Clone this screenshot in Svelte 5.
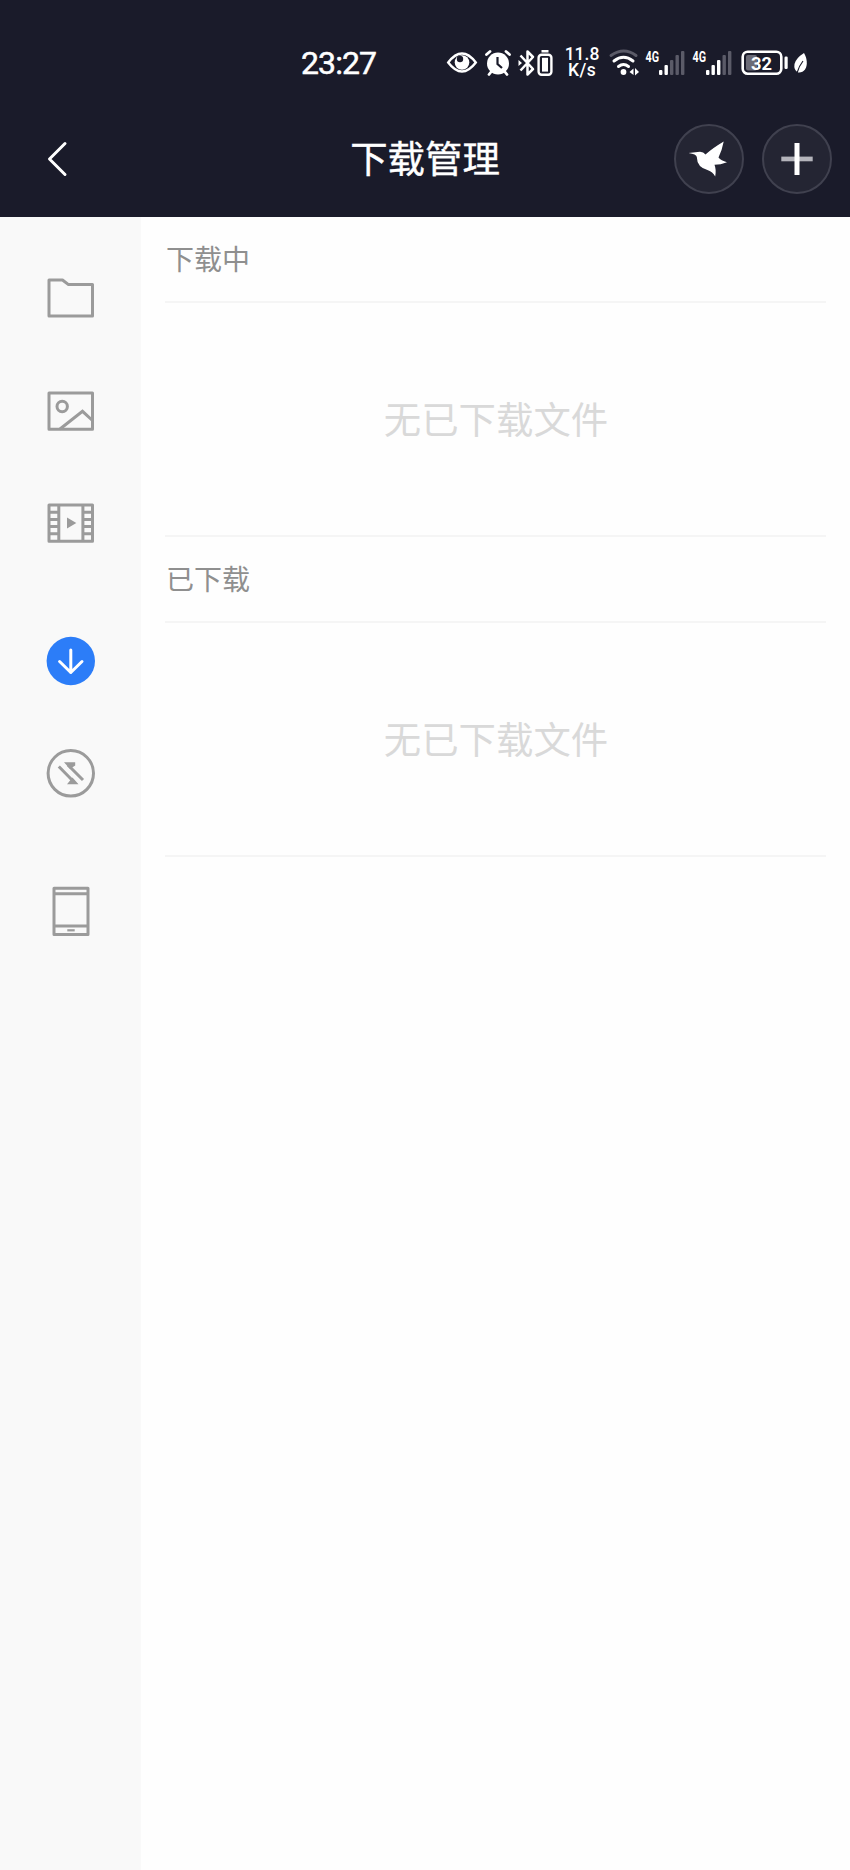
<script lang="ts">
  const navGroups: string[][] = [
    ["folder", "image", "video"],
    ["download", "transfer"],
    ["device"],
  ];

  const sections = [
    { title: "下载中", empty: "无已下载文件" },
    { title: "已下载", empty: "无已下载文件" },
  ];

  // Number of lit bars for each SIM
  const sims = [2, 3];
  const barHeights = [5, 10, 15, 20, 24];

  let active = "download";
</script>

<div class="screen">
  <header>
    <div class="status">
      <span class="time">23:27</span>
      <div class="indicators">
        <svg class="eye" width="32" height="36" viewBox="0 0 32 36">
          <path d="M2.2 17.5Q9 8.500 16 8.500T29.800 17.500Q23 26.500 16 26.500T2.200 17.500Z" fill="none" stroke="#fff" stroke-width="2.4" />
          <circle cx="16" cy="17.500" r="7.300" fill="#fff" />
          <circle cx="14" cy="14" r="3.200" fill="#1a1b2a" />
        </svg>
        <svg class="alarm" width="28" height="36" viewBox="0 0 28 36">
          <circle cx="14" cy="18.500" r="11" fill="#fff" />
          <path d="M2.500 9.500L6 6.500M25.500 9.500L22 6.500M7 27L5 29.500M21 27L23 29.500" stroke="#fff" stroke-width="2.800" stroke-linecap="round" />
          <path d="M13.500 12V19L18 23" fill="none" stroke="#1a1b2a" stroke-width="2.200" />
        </svg>
        <svg class="bluetooth" width="36" height="36" viewBox="0 0 36 36">
          <path d="M2.500 10.500L15 24L9.500 29.500V6.500L15 12L2.500 25.500" fill="none" stroke="#fff" stroke-width="2.500" stroke-linejoin="round" />
          <path d="M0.500 15L4 18L0.500 21ZM23.500 5h7v2.500h-7z" fill="#fff" />
          <rect x="20.600" y="9.700" width="12.800" height="20" rx="3" fill="none" stroke="#fff" stroke-width="2.400" />
          <rect x="24" y="12.800" width="6" height="13.800" fill="#fff" />
        </svg>
        <div class="speed"><span>11.8</span><span class="unit">K/s</span></div>
        <svg class="wifi" width="32" height="36" viewBox="0 0 32 36">
          <g fill="none" stroke-linecap="round" stroke-width="3">
            <path d="M3 10.500Q16 1.500 28 10.500" stroke="#5b5b68" />
            <path d="M6 16Q15.500 8.500 25 16" stroke="#fff" />
            <path d="M10.500 21.500Q15.500 17.500 20.500 21.500" stroke="#fff" />
          </g>
          <circle cx="15.500" cy="27" r="2.900" fill="#fff" />
          <path d="M25.500 23.500V30L21.500 27ZM27 23V30.500L31 27Z" fill="#fff" />
        </svg>
        {#each sims as lit}
          <div class="sim">
            <svg width="41" height="36" viewBox="0 0 41 36">
              <text x="0.500" y="16.500" textLength="13.500" lengthAdjust="spacingAndGlyphs">4G</text>
              {#each barHeights as h, i}
                <rect x={14 + i * 5.5} y={30 - h} width="3.400" height={h} rx="1" fill={i < lit ? "#fff" : "#5b5b68"} />
              {/each}
            </svg>
          </div>
        {/each}
        <svg class="battery" width="48" height="36" viewBox="0 0 48 36">
          <rect x="1.700" y="6.700" width="38.600" height="22" rx="5" fill="none" stroke="#fff" stroke-width="2.600" />
          <rect x="5" y="10" width="11" height="15.500" rx="2" fill="#6b6b77" />
          <text x="10" y="24.500" textLength="21" lengthAdjust="spacingAndGlyphs">32</text>
          <rect x="43.500" y="11.500" width="3.200" height="12.500" rx="1.200" fill="#fff" />
        </svg>
        <svg class="leaf" width="16" height="36" viewBox="0 0 16 36">
          <path d="M11 8C14 13 15 20 12 24.500Q9.500 28 5 27.500Q0.500 25 1.500 19Q3 13 11 8Z" fill="#fff" />
          <path d="M10 16Q6 21 4 28" fill="none" stroke="#1a1b2a" stroke-width="1.200" />
        </svg>
      </div>
    </div>

    <div class="toolbar">
      <button class="back" aria-label="返回">
        <svg width="24" height="40" viewBox="0 0 24 40">
          <path d="M20 4.500L4.500 20L20 35.500" fill="none" stroke="#fff" stroke-width="3" stroke-linecap="round" stroke-linejoin="round" />
        </svg>
      </button>
      <h1>下载管理</h1>
      <div class="actions">
        <button class="round" aria-label="迅雷">
          <svg width="40" height="40" viewBox="0 0 40 40">
            <path d="M-0.500 13.900L11 12.700Q14.500 12.700 16.500 15.500Q23 9.500 34.700 2.500Q33 11.500 29.500 18.500Q32 21.500 38 23.200Q31.500 25.800 25.500 25.800Q27.500 31 26.200 37.500Q23.500 32.500 19 31.200Q8 28.500 7.800 18Q7.500 15 -0.500 13.900Z" fill="#fff" />
          </svg>
        </button>
        <button class="round" aria-label="添加">
          <svg width="40" height="40" viewBox="0 0 40 40">
            <rect x="4.300" y="17.600" width="31.400" height="4.700" fill="#b4b4bb" />
            <rect x="17.500" y="4" width="5" height="32" fill="#fff" />
          </svg>
        </button>
      </div>
    </div>
  </header>

  <div class="body">
    <nav>
      {#each navGroups as group}
        <div class="group">
          {#each group as item}
            <button class="nav-item" class:active={item === active} aria-label={item}>
              <svg width="50" height="50" viewBox="0 0 50 50" fill="none" stroke="currentColor" stroke-width="3">
                {#if item === "folder"}
                  <path d="M3 7H16.500L22.500 11.600H46.500V43.100H3Z" stroke-linejoin="round" />
                {:else if item === "image"}
                  <rect x="3" y="7.100" width="43.500" height="36.200" stroke-linejoin="round" />
                  <circle cx="16.200" cy="20.500" r="5.200" />
                  <path d="M14 43L36.500 25.300L46.500 34.500" />
                {:else if item === "video"}
                  <rect x="3" y="7" width="43.500" height="36.200" stroke-linejoin="round" />
                  <path d="M12.800 7V43M36.900 7V43M3 14.200H13M3 21.400H13M3 28.600H13M3 35.800H13M37 14.200H47M37 21.400H47M37 28.600H47M37 35.800H47" />
                  <path d="M21 19.500L30.300 25L21 30.500Z" fill="currentColor" stroke="none" />
                {:else if item === "download"}
                  <circle cx="24.800" cy="25" r="24.200" fill="currentColor" stroke="none" />
                  <path d="M24.800 14V36.500M13.600 25.500L24.800 36.500L36 25.500" stroke="#fff" stroke-linecap="round" stroke-linejoin="round" />
                {:else if item === "transfer"}
                  <circle cx="24.800" cy="25.300" r="22.700" />
                  <path d="M12.800 18.500L28 34M37 32L22 17" />
                  <path d="M21 36.300H32.500L26.500 29.500ZM18 14.300H29.200V17.500L24 21Z" fill="currentColor" stroke="none" />
                {:else}
                  <rect x="8" y="2.200" width="34" height="46.200" stroke-linejoin="round" />
                  <path d="M8 7.800H42M8 40H42" />
                  <path d="M21.300 44.300H28.700" stroke-width="2.200" />
                {/if}
              </svg>
            </button>
          {/each}
        </div>
      {/each}
    </nav>

    <main>
      {#each sections as section}
        <section>
          <h2>{section.title}</h2>
          <p>{section.empty}</p>
        </section>
      {/each}
    </main>
  </div>
</div>

<style>
  :global(body) {
    margin: 0;
    background: #fff;
  }

  .screen {
    display: flex;
    flex-direction: column;
    width: 850px;
    height: 1870px;
    font-family: "Noto Sans CJK SC", sans-serif;
  }

  header {
    height: 217px;
    background: #1a1b2a;
    color: #fff;
  }

  button {
    display: flex;
    align-items: center;
    justify-content: center;
    padding: 0;
    border: none;
    background: none;
    color: inherit;
  }

  svg {
    display: block;
    overflow: visible;
    flex: none;
  }

  .status {
    display: flex;
    justify-content: space-between;
    box-sizing: border-box;
    height: 100px;
    padding: 45px 41px 0 301px;
    font-family: Roboto, sans-serif;
  }

  .time {
    font-size: 32px;
    font-weight: 400;
    line-height: 37px;
    letter-spacing: -0.9px;
    -webkit-text-stroke: 0.5px #fff;
  }

  .indicators {
    display: flex;
    height: 36px;
  }

  .alarm {
    margin-left: 6px;
  }

  .bluetooth {
    margin-left: 6px;
  }

  .speed {
    display: flex;
    flex-direction: column;
    align-items: center;
    width: 36px;
    margin-left: 10px;
    padding-top: 1px;
    font-size: 17.5px;
    font-weight: 500;
    line-height: 17px;
  }

  .unit {
    line-height: 15px;
    letter-spacing: 0.4px;
  }

  .wifi {
    margin-left: 8px;
  }

  .sim {
    width: 41px;
    margin-left: 5px;
  }

  .sim + .sim {
    margin-left: 6px;
  }

  .sim text {
    fill: #fff;
    font-size: 15px;
    font-weight: 700;
  }

  .battery {
    margin-left: 8px;
  }

  .battery text {
    fill: #fff;
    font-size: 19px;
    font-weight: 700;
  }

  .leaf {
    margin-left: 4px;
  }

  .toolbar {
    display: grid;
    grid-template-columns: 1fr auto 1fr;
    align-items: center;
    height: 117px;
    padding: 0 18px 0 45px;
  }

  .back {
    width: 24px;
    height: 40px;
  }

  h1 {
    margin: 0 0 3px -27px;
    font-size: 37.4px;
    font-weight: 400;
    line-height: 54px;
    -webkit-text-stroke: 0.4px #fff;
  }

  .actions {
    display: flex;
    justify-content: flex-end;
    gap: 18px;
  }

  .round {
    box-sizing: border-box;
    width: 70px;
    height: 70px;
    border: 2px solid #40414f;
    border-radius: 50%;
    background: #242533;
  }

  .body {
    display: flex;
    flex: 1;
  }

  nav {
    display: flex;
    flex-direction: column;
    gap: 25px;
    box-sizing: border-box;
    width: 141px;
    padding-top: 25px;
    background: #f9f9f9;
  }

  .nav-item {
    width: 141px;
    height: 112.5px;
    color: #9b9b9b;
  }

  .nav-item.active {
    color: #2c7df8;
  }

  main {
    flex: 1;
    padding: 0 24px 0 24px;
    background: #fefefe;
  }

  h2,
  p {
    box-sizing: border-box;
    margin: 0;
    border-bottom: 2px solid #f5f5f5;
    font-weight: 400;
  }

  h2 {
    height: 86px;
    padding-left: 1px;
    color: #8f8f8f;
    font-size: 28px;
    line-height: 82px;
  }

  p {
    height: 234px;
    padding-left: 1px;
    color: #d9d9d9;
    font-size: 37.4px;
    line-height: 231px;
    text-align: center;
  }
</style>
